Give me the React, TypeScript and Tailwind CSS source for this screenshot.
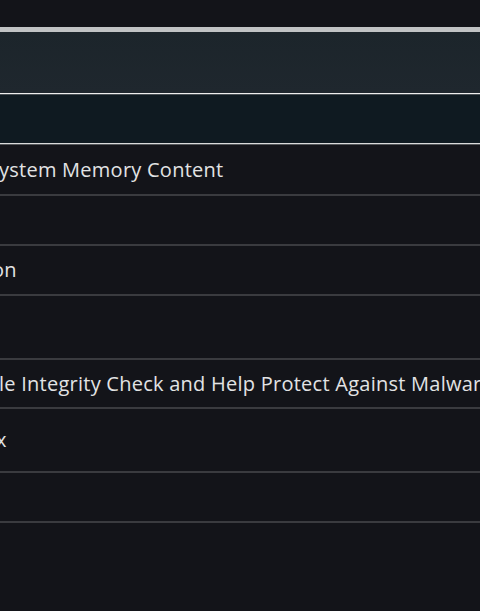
const ROWS = [
  { text: 'ystem Memory Content', h: 'h-[49px]', shift: '-ml-[1px]' },
  { text: '', h: 'h-[48px]', shift: '' },
  { text: 'on', h: 'h-[48px]', shift: '-ml-[8px]' },
  { text: '', h: 'h-[62px]', shift: '' },
  { text: 'le Integrity Check and Help Protect Against Malware', h: 'h-[47px]', shift: '-ml-[1px]' },
  { text: 'x', h: 'h-[62px]', shift: '-ml-[4px]' },
  { text: '', h: 'h-[48px]', shift: '' },
];

export default function App() {
  return (
    <div
      className="w-[480px] h-[611px] overflow-hidden bg-[#131419] text-[#e2e3e4]"
      style={{ fontFamily: '"Open Sans", "Noto Sans", sans-serif' }}
    >
      <div className="h-[27px]" />
      <div className="h-[5px] bg-[#c1c3c4]" />
      {/* header band */}
      <div className="h-[61px] bg-gradient-to-b from-[#1c252b] to-[#1f272e]" />
      <div className="h-px bg-[#eeeeee]" />
      <div className="h-px bg-[#4a5156]" />
      {/* selected band */}
      <div className="h-[48px] bg-[#0f1a21]" />
      <div className="h-px bg-[#d9dadb]" />
      <div className="h-px bg-[#55585b]" />

      {ROWS.map((row, i) => (
        <div key={i}>
          <div className={`${row.h} flex items-center overflow-hidden whitespace-nowrap`}>
            {row.text && (
              <span className={`${row.shift} text-[20px] leading-none font-medium tracking-[0.25px]`}>
                {row.text}
              </span>
            )}
          </div>
          <div className="h-[2px] bg-[#3a3b3f]" />
        </div>
      ))}
    </div>
  );
}
